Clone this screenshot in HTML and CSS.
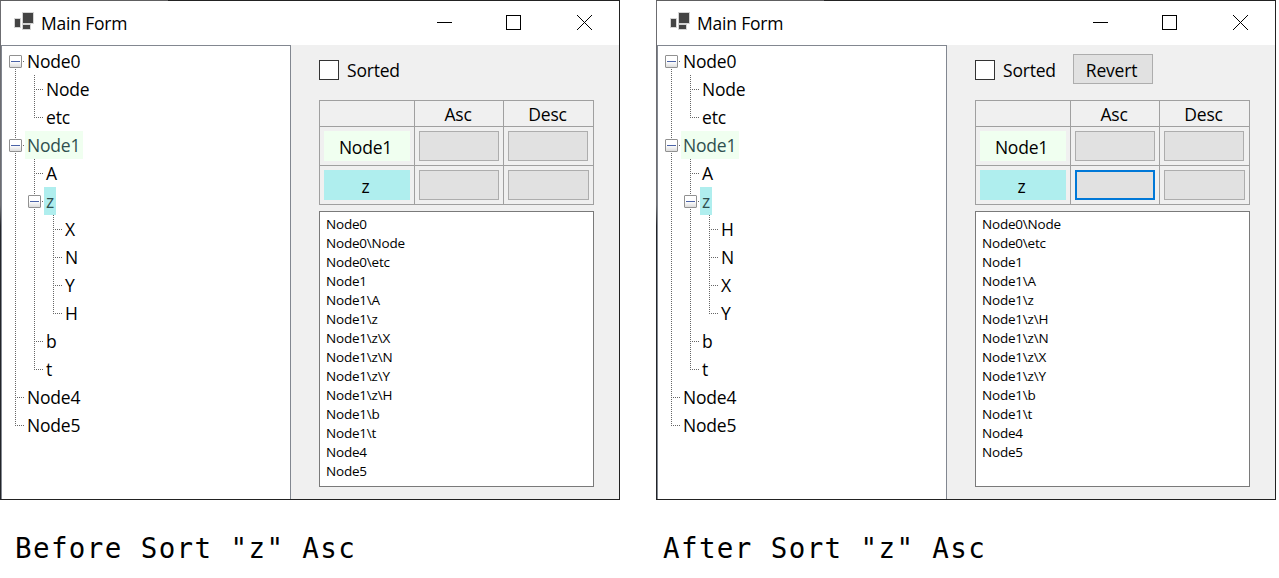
FILE: index.html
```
<!DOCTYPE html>
<html lang="en">
<head>
    <meta charset="UTF-8">
    <meta name="viewport" content="width=device-width, initial-scale=1.0">
    <title>Sort Node Demo</title>
    <link rel="stylesheet" href="styles.css">
</head>
<body>
    <div class="page">
        <div class="column">
            <div class="window">
                <div class="titlebar">
                    <svg class="app-icon" width="21" height="20" viewBox="0 0 21 20">
                        <g fill="#444" stroke="#d4d4d4" stroke-width="1">
                            <rect x="8.5" y="0.5" width="11" height="11"/>
                            <rect x="0.5" y="6.5" width="6" height="9"/>
                            <rect x="8.5" y="12.5" width="8" height="5"/>
                        </g>
                    </svg>
                    <span class="title">Main Form</span>
                    <svg class="controls" width="155" height="15" viewBox="0 0 155 15">
                        <g fill="none" stroke="#000" stroke-width="1">
                            <path d="M0 7.5H15"/>
                            <rect x="69.5" y="0.5" width="14" height="14"/>
                            <path d="M140 0L155 15M155 0L140 15"/>
                        </g>
                    </svg>
                </div>
                <div class="content">
                    <div class="tree">
                        <ul>
                            <li><div class="node"><i class="toggle"></i><span>Node0</span></div>
                                <ul>
                                    <li><div class="node leaf"><span>Node</span></div></li>
                                    <li><div class="node leaf"><span>etc</span></div></li>
                                </ul>
                            </li>
                            <li><div class="node"><i class="toggle"></i><span class="green">Node1</span></div>
                                <ul>
                                    <li><div class="node leaf"><span>A</span></div></li>
                                    <li><div class="node"><i class="toggle"></i><span class="blue">z</span></div>
                                        <ul>
                                            <li><div class="node leaf"><span>X</span></div></li>
                                            <li><div class="node leaf"><span>N</span></div></li>
                                            <li><div class="node leaf"><span>Y</span></div></li>
                                            <li><div class="node leaf"><span>H</span></div></li>
                                        </ul>
                                    </li>
                                    <li><div class="node leaf"><span>b</span></div></li>
                                    <li><div class="node leaf"><span>t</span></div></li>
                                </ul>
                            </li>
                            <li><div class="node leaf"><span>Node4</span></div></li>
                            <li><div class="node leaf"><span>Node5</span></div></li>
                        </ul>
                    </div>
                    <div class="panel">
                        <div class="options">
                            <div class="checkbox"></div>
                            <span class="checkbox-label">Sorted</span>
                        </div>
                        <div class="grid">
                            <div class="cell"></div>
                            <div class="cell head">Asc</div>
                            <div class="cell head">Desc</div>
                            <div class="cell"><div class="label green">Node1</div></div>
                            <div class="cell"><button class="button narrow"></button></div>
                            <div class="cell"><button class="button narrow"></button></div>
                            <div class="cell"><div class="label blue">z</div></div>
                            <div class="cell"><button class="button"></button></div>
                            <div class="cell"><button class="button"></button></div>
                        </div>
                        <div class="output">
                            <div>Node0</div>
                            <div>Node0\Node</div>
                            <div>Node0\etc</div>
                            <div>Node1</div>
                            <div>Node1\A</div>
                            <div>Node1\z</div>
                            <div>Node1\z\X</div>
                            <div>Node1\z\N</div>
                            <div>Node1\z\Y</div>
                            <div>Node1\z\H</div>
                            <div>Node1\b</div>
                            <div>Node1\t</div>
                            <div>Node4</div>
                            <div>Node5</div>
                        </div>
                    </div>
                </div>
            </div>
            <div class="caption before">Before Sort "z" Asc</div>
        </div>

        <div class="column">
            <div class="window">
                <div class="titlebar">
                    <svg class="app-icon" width="21" height="20" viewBox="0 0 21 20">
                        <g fill="#444" stroke="#d4d4d4" stroke-width="1">
                            <rect x="8.5" y="0.5" width="11" height="11"/>
                            <rect x="0.5" y="6.5" width="6" height="9"/>
                            <rect x="8.5" y="12.5" width="8" height="5"/>
                        </g>
                    </svg>
                    <span class="title">Main Form</span>
                    <svg class="controls" width="155" height="15" viewBox="0 0 155 15">
                        <g fill="none" stroke="#000" stroke-width="1">
                            <path d="M0 7.5H15"/>
                            <rect x="69.5" y="0.5" width="14" height="14"/>
                            <path d="M140 0L155 15M155 0L140 15"/>
                        </g>
                    </svg>
                </div>
                <div class="content">
                    <div class="tree">
                        <ul>
                            <li><div class="node"><i class="toggle"></i><span>Node0</span></div>
                                <ul>
                                    <li><div class="node leaf"><span>Node</span></div></li>
                                    <li><div class="node leaf"><span>etc</span></div></li>
                                </ul>
                            </li>
                            <li><div class="node"><i class="toggle"></i><span class="green">Node1</span></div>
                                <ul>
                                    <li><div class="node leaf"><span>A</span></div></li>
                                    <li><div class="node"><i class="toggle"></i><span class="blue">z</span></div>
                                        <ul>
                                            <li><div class="node leaf"><span>H</span></div></li>
                                            <li><div class="node leaf"><span>N</span></div></li>
                                            <li><div class="node leaf"><span>X</span></div></li>
                                            <li><div class="node leaf"><span>Y</span></div></li>
                                        </ul>
                                    </li>
                                    <li><div class="node leaf"><span>b</span></div></li>
                                    <li><div class="node leaf"><span>t</span></div></li>
                                </ul>
                            </li>
                            <li><div class="node leaf"><span>Node4</span></div></li>
                            <li><div class="node leaf"><span>Node5</span></div></li>
                        </ul>
                    </div>
                    <div class="panel">
                        <div class="options">
                            <div class="checkbox"></div>
                            <span class="checkbox-label">Sorted</span>
                            <button class="button revert">Revert</button>
                        </div>
                        <div class="grid">
                            <div class="cell"></div>
                            <div class="cell head">Asc</div>
                            <div class="cell head">Desc</div>
                            <div class="cell"><div class="label green">Node1</div></div>
                            <div class="cell"><button class="button narrow"></button></div>
                            <div class="cell"><button class="button narrow"></button></div>
                            <div class="cell"><div class="label blue">z</div></div>
                            <div class="cell"><button class="button focused"></button></div>
                            <div class="cell"><button class="button"></button></div>
                        </div>
                        <div class="output">
                            <div>Node0\Node</div>
                            <div>Node0\etc</div>
                            <div>Node1</div>
                            <div>Node1\A</div>
                            <div>Node1\z</div>
                            <div>Node1\z\H</div>
                            <div>Node1\z\N</div>
                            <div>Node1\z\X</div>
                            <div>Node1\z\Y</div>
                            <div>Node1\b</div>
                            <div>Node1\t</div>
                            <div>Node4</div>
                            <div>Node5</div>
                        </div>
                    </div>
                </div>
            </div>
            <div class="caption after">After Sort "z" Asc</div>
        </div>
    </div>
</body>
</html>
```
FILE: styles.css
```
* {
    box-sizing: border-box;
}

body {
    margin: 0;
    background-color: #fff;
    color: #000;
    font-family: "Open Sans", "Noto Sans", sans-serif;
    font-size: 17.5px;
    letter-spacing: -0.2px;
}

.page {
    display: flex;
    gap: 36px;
}

.column {
    width: 620px;
}

/* the 1px padding shows the background as the window frame */
.window {
    display: flex;
    flex-direction: column;
    height: 500px;
    padding: 1px;
    background: linear-gradient(to right, #5e5e60 168px, transparent 168px) top left / 100% 1px no-repeat,
                linear-gradient(#6c6c70 205px, #222428 226px) top left / 1px 100% no-repeat,
                #222;
}

.titlebar {
    display: flex;
    align-items: flex-start;
    height: 44px;
    background-color: #fff;
}

.app-icon {
    margin: 11px 0 0 13px;
}

.title {
    margin-left: 6px;
    line-height: 44px;
}

.controls {
    margin: 14px 27px 0 auto;
}

.content {
    display: flex;
    flex: 1;
}

.tree {
    width: 290px;
    padding: 1px 0 0 7px;
    background-color: #fff;
    border: 1px solid #828790;
    border-bottom: none;
}

.tree ul {
    margin: 0;
    padding: 0;
    list-style: none;
}

.tree ul ul {
    padding-left: 19px;
}

/* dotted connector lines */
.tree li {
    background: repeating-linear-gradient(#666 0 1px, #fff 1px 2px) 6px 0 / 1px 100% no-repeat;
}

.tree > ul > li:first-child {
    background-position: 6px 14px;
}

.tree li:last-child {
    background-size: 1px 14px;
}

.node {
    display: flex;
    align-items: center;
    height: 28px;
    background: repeating-linear-gradient(to right, #666 0 1px, #fff 1px 2px) 6px 14px / 9px 1px no-repeat;
}

.node.leaf {
    padding-left: 16px;
}

.node span {
    height: 28px;
    padding: 0 2px;
    line-height: 28px;
}

.toggle {
    display: flex;
    align-items: center;
    justify-content: center;
    width: 13px;
    height: 13px;
    margin-right: 3px;
    background: linear-gradient(#fff 50%, #ddd);
    border: 1px solid #919191;
    border-radius: 1px;
}

.toggle::before {
    content: "";
    width: 9px;
    height: 1px;
    background-color: #4b63a7;
}

.green {
    background-color: #f0fff0;
}

.blue {
    background-color: #afeeee;
}

.node .green,
.node .blue {
    color: #2f4f4f;
}

.node .green {
    padding-right: 3px;
}

.panel {
    flex: 1;
    padding: 9px 0 0 28px;
    background-color: #f0f0f0;
}

.options {
    display: flex;
    align-items: center;
    height: 30px;
    margin-bottom: 16px;
}

.checkbox {
    width: 20px;
    height: 20px;
    margin-top: 2px;
    background-color: #fff;
    border: 1px solid #333;
}

.checkbox-label {
    width: 70px;
    margin: 1px 0 0 8px;
}

.button {
    width: 100%;
    height: 30px;
    padding: 0;
    background-color: #e1e1e1;
    border: 1px solid #adadad;
    font: inherit;
    letter-spacing: inherit;
}

.narrow {
    width: 80px;
}

.focused {
    border: 2px solid #0078d7;
}

.revert {
    width: 80px;
    padding: 2px 3px 0 0;
}

.grid {
    display: grid;
    grid-template-columns: 95px 89px 90px;
    grid-template-rows: 26px 39px 39px;
    width: 275px;
    border-top: 1px solid #a0a0a0;
    border-left: 1px solid #a0a0a0;
}

.cell {
    display: flex;
    padding: 4px;
    border-right: 1px solid #a0a0a0;
    border-bottom: 1px solid #a0a0a0;
}

.head {
    justify-content: center;
    padding: 1px 2px 0 0;
    line-height: 24px;
}

.label {
    width: 86px;
    height: 30px;
    padding: 1px 3px 0 0;
    line-height: 30px;
    text-align: center;
}

.output {
    width: 275px;
    height: 276px;
    margin-top: 6px;
    padding: 3px 6px;
    background-color: #fff;
    border: 1px solid #7a7a7a;
    font-size: 13.5px;
    letter-spacing: -0.2px;
    line-height: 19px;
}

.caption {
    margin-top: 29px;
    font-family: "DejaVu Sans Mono", monospace;
    font-size: 27.5px;
    line-height: 38px;
    letter-spacing: 1.4px;
}

.before {
    padding-left: 15px;
}

.after {
    padding-left: 7px;
}
```
